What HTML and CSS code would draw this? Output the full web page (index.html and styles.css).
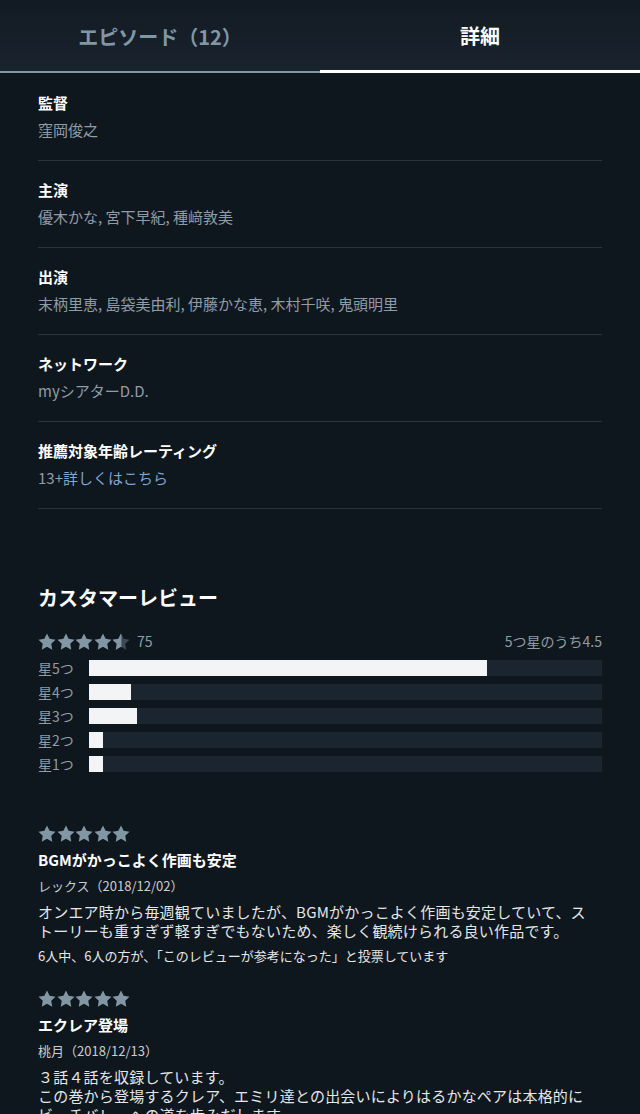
FILE: index.html
```html
<!DOCTYPE html>
<html lang="ja">
<head>
    <meta charset="UTF-8">
    <meta name="viewport" content="width=device-width, initial-scale=1.0">
    <title>詳細</title>
    <link rel="stylesheet" href="styles.css">
</head>
<body>
    <svg width="0" height="0" class="defs">
        <defs>
            <path id="star" d="M10 0.5L12.94 6.45 19.51 7.41 14.76 12.05 15.88 18.59 10 15.5 4.12 18.59 5.24 12.05 0.49 7.41 7.06 6.45Z"/>
            <clipPath id="halfClip"><rect x="0" y="0" width="10.5" height="19"/></clipPath>
        </defs>
    </svg>

    <div class="tabs">
        <div class="tab">エピソード（12）</div>
        <div class="tab active">詳細</div>
    </div>

    <div class="details">
        <div class="detail">
            <div class="label">監督</div>
            <div class="value">窪岡俊之</div>
        </div>
        <div class="detail">
            <div class="label">主演</div>
            <div class="value">優木かな, 宮下早紀, 種﨑敦美</div>
        </div>
        <div class="detail">
            <div class="label">出演</div>
            <div class="value">末柄里恵, 島袋美由利, 伊藤かな恵, 木村千咲, 鬼頭明里</div>
        </div>
        <div class="detail">
            <div class="label">ネットワーク</div>
            <div class="value">myシアターD.D.</div>
        </div>
        <div class="detail">
            <div class="label">推薦対象年齢レーティング</div>
            <div class="value">13+<a class="link" href="#">詳しくはこちら</a></div>
        </div>
    </div>

    <div class="reviews">
        <h2>カスタマーレビュー</h2>

        <div class="summary">
            <div class="stars">
                <svg viewBox="0 0 20 19"><use href="#star"/></svg>
                <svg viewBox="0 0 20 19"><use href="#star"/></svg>
                <svg viewBox="0 0 20 19"><use href="#star"/></svg>
                <svg viewBox="0 0 20 19"><use href="#star"/></svg>
                <svg viewBox="0 0 20 19">
                    <use href="#star" class="empty"/>
                    <use href="#star" clip-path="url(#halfClip)"/>
                </svg>
            </div>
            <span class="count">75</span>
            <span class="average">5つ星のうち4.5</span>
        </div>

        <div class="bars">
            <div class="bar-row">
                <span class="bar-label">星5つ</span>
                <div class="track"><div class="fill" style="width: 77.6%"></div></div>
            </div>
            <div class="bar-row">
                <span class="bar-label">星4つ</span>
                <div class="track"><div class="fill" style="width: 8.2%"></div></div>
            </div>
            <div class="bar-row">
                <span class="bar-label">星3つ</span>
                <div class="track"><div class="fill" style="width: 9.4%"></div></div>
            </div>
            <div class="bar-row">
                <span class="bar-label">星2つ</span>
                <div class="track"><div class="fill" style="width: 2.7%"></div></div>
            </div>
            <div class="bar-row">
                <span class="bar-label">星1つ</span>
                <div class="track"><div class="fill" style="width: 2.7%"></div></div>
            </div>
        </div>

        <div class="review">
            <div class="stars">
                <svg viewBox="0 0 20 19"><use href="#star"/></svg>
                <svg viewBox="0 0 20 19"><use href="#star"/></svg>
                <svg viewBox="0 0 20 19"><use href="#star"/></svg>
                <svg viewBox="0 0 20 19"><use href="#star"/></svg>
                <svg viewBox="0 0 20 19"><use href="#star"/></svg>
            </div>
            <div class="review-title">BGMがかっこよく作画も安定</div>
            <div class="author">レックス（2018/12/02）</div>
            <p class="review-text">オンエア時から毎週観ていましたが、BGMがかっこよく作画も安定していて、ス<br>トーリーも重すぎず軽すぎでもないため、楽しく観続けられる良い作品です。</p>
            <div class="helpful">6人中、6人の方が、「このレビューが参考になった」と投票しています</div>
        </div>

        <div class="review">
            <div class="stars">
                <svg viewBox="0 0 20 19"><use href="#star"/></svg>
                <svg viewBox="0 0 20 19"><use href="#star"/></svg>
                <svg viewBox="0 0 20 19"><use href="#star"/></svg>
                <svg viewBox="0 0 20 19"><use href="#star"/></svg>
                <svg viewBox="0 0 20 19"><use href="#star"/></svg>
            </div>
            <div class="review-title">エクレア登場</div>
            <div class="author">桃月（2018/12/13）</div>
            <p class="review-text">３話４話を収録しています。<br>この巻から登場するクレア、エミリ達との出会いによりはるかなペアは本格的に<br>ビーチバレーへの道を歩みだします。</p>
        </div>
    </div>
</body>
</html>
```

FILE: styles.css
```css
body {
    margin: 0;
    background-color: #0f171e;
    color: #ffffff;
    font-family: "Noto Sans CJK JP", "Noto Sans", sans-serif;
    overflow: hidden;
}

.defs {
    position: absolute;
}

/* top tab bar */
.tabs {
    display: flex;
    height: 73px;
    background: linear-gradient(#121a23, #1a242e);
}

.tab {
    flex: 1;
    display: flex;
    align-items: center;
    justify-content: center;
    font-size: 20px;
    font-weight: bold;
    color: #8197a4;
    border-bottom: 2px solid #8197a4;
    padding-top: 1px;
}

.tab.active {
    color: #ffffff;
    border-bottom: 3px solid #ffffff;
    padding-top: 0;
}

/* cast / crew list */
.details {
    padding: 0 38px;
}

.detail {
    padding: 19px 0 20px;
    border-bottom: 1px solid #2b343d;
}

.detail:first-child {
    padding-top: 20px;
}

.label {
    font-size: 15px;
    line-height: 20px;
    font-weight: bold;
}

.value {
    margin-top: 7px;
    font-size: 15px;
    line-height: 20px;
    color: #8f9ca6;
}

.link {
    color: #7ea6cf;
    text-decoration: none;
}

/* reviews */
.reviews {
    padding: 0 38px;
}

.reviews h2 {
    margin: 75px 0 0;
    font-size: 20px;
    line-height: 28px;
    font-weight: bold;
}

.stars {
    display: flex;
    align-items: center;
    gap: 0.5px;
    height: 18px;
}

.stars svg {
    width: 18px;
    height: 17px;
    fill: #8197a4;
}

.stars .empty {
    fill: #3b4956;
}

.summary {
    display: flex;
    align-items: center;
    margin-top: 19px;
    height: 20px;
    font-size: 14px;
    color: #8f9ca6;
}

.count {
    margin-left: 7px;
}

.average {
    margin-left: auto;
}

.bars {
    margin-top: 5px;
}

.bar-row {
    display: flex;
    align-items: center;
    height: 24px;
}

.bar-label {
    width: 51px;
    font-size: 14px;
    color: #8f9ca6;
}

.track {
    flex: 1;
    height: 16px;
    background-color: #1b2530;
}

.fill {
    height: 100%;
    background-color: #f3f4f6;
}

.review {
    margin-top: 24px;
}

.bars + .review {
    margin-top: 49px;
}

.review .stars {
    height: 17px;
}

.review-title {
    margin-top: 8px;
    font-size: 15px;
    line-height: 20px;
    font-weight: bold;
}

.author {
    margin-top: 6px;
    font-size: 13px;
    line-height: 20px;
    color: #c9cdd1;
}

.review-text {
    margin: 6px 0 0;
    font-size: 15px;
    line-height: 19px;
    letter-spacing: 0.2px;
    color: #e4e6e8;
}

.helpful {
    margin-top: 6px;
    font-size: 13px;
    line-height: 20px;
    color: #e4e6e8;
}
```
